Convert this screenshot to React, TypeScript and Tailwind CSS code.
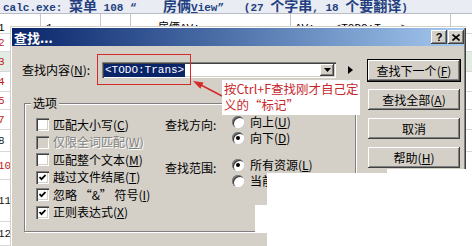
import type { ReactNode } from "react"

const sunken =
  "shadow-[inset_1px_1px_0_#808080,inset_2px_2px_0_#404040,inset_-1px_-1px_0_#ffffff,inset_-2px_-2px_0_#d4d0c8]"
const raised =
  "shadow-[inset_-1px_-1px_0_#404040,inset_1px_1px_0_#ffffff,inset_-2px_-2px_0_#808080,inset_2px_2px_0_#d4d0c8]"

const rows = [
  { n: "2", h: "h-[18px]", red: true },
  { n: "3", h: "h-[20px]", red: true, tint: true },
  { n: "4", h: "h-[20px]", red: true },
  { n: "5", h: "h-[18px]", red: true },
  { n: "7", h: "h-[20px]", red: true },
  { n: "8", h: "h-[22px]", red: false },
  { n: "10", h: "h-[28px]", red: true },
  { n: "11", h: "h-[42px]", red: false },
  { n: "12", h: "h-[24px]", red: false },
]

function Mn({ children }: { children: ReactNode }) {
  return (
    <>
      (<span className="underline underline-offset-[1px]">{children}</span>)
    </>
  )
}

function CheckBox({
  label,
  checked,
  disabled,
}: {
  label: ReactNode
  checked?: boolean
  disabled?: boolean
}) {
  return (
    <div className="h-[17.5px] flex items-center gap-[4px]">
      <div
        className={`w-[13px] h-[13px] shrink-0 flex items-center justify-center ${sunken} ${
          disabled ? "bg-[#d4d0c8]" : "bg-white"
        }`}
      >
        {checked && (
          <svg width="7" height="7" viewBox="0 0 7 7">
            <polyline points="0.5,3 2.5,5.2 6.5,1" fill="none" stroke="#000" strokeWidth="1.8" />
          </svg>
        )}
      </div>
      <span
        className={
          disabled ? "text-[#808080] [text-shadow:1px_1px_0_#ffffff]" : "text-black"
        }
      >
        {label}
      </span>
    </div>
  )
}

function Radio({ label, checked }: { label: ReactNode; checked?: boolean }) {
  return (
    <div className="h-[16px] flex items-center gap-[6px]">
      <div className="w-[12px] h-[12px] shrink-0 rounded-full bg-white shadow-[inset_1px_1px_0_#808080,inset_2px_2px_0_#404040,inset_-1px_-1px_0_#ffffff] flex items-center justify-center">
        {checked && <div className="w-[4px] h-[4px] rounded-full bg-black" />}
      </div>
      <span className="whitespace-nowrap">{label}</span>
    </div>
  )
}

function Btn({ children, primary }: { children: ReactNode; primary?: boolean }) {
  return (
    <div
      className={`h-[21px] w-[92px] flex items-center justify-center bg-[#d4d0c8] ${raised} ${
        primary ? "outline outline-1 outline-black" : ""
      }`}
    >
      {children}
    </div>
  )
}

export default function App() {
  return (
    <div className="relative w-[472px] h-[246px] overflow-hidden bg-white text-[12px] leading-[16px] font-['Noto_Sans_CJK_SC',sans-serif] text-black">
      {/* header line of the translation list */}
      <div className="h-[14px] bg-[#e9ecf2] overflow-hidden whitespace-pre font-bold text-[#233f80] border-b border-[#b8bcc8]">
        <div className="-mt-[3px] pl-[3px] leading-[17px] text-[14px]">
          <span className="font-['Liberation_Mono',monospace] text-[11px]">calc.exe: </span>
          菜单
          <span className="font-['Liberation_Mono',monospace] text-[11px]"> 108 “    </span>
          房俩
          <span className="font-['Liberation_Mono',monospace] text-[11px]">
            <span className="underline">V</span>iew”   (27{" "}
          </span>
          个字串
          <span className="font-['Liberation_Mono',monospace] text-[11px]">, 18 </span>
          个要翻译
          <span className="font-['Liberation_Mono',monospace] text-[11px]">)</span>
        </div>
      </div>

      {/* first table row */}
      <div className="flex h-[20px] border-b border-[#d8d8d8] font-['Liberation_Mono','Noto_Sans_CJK_SC',monospace] text-[11px] leading-[14px]">
        <div className="w-[43px] border-r border-[#c8c8c8] pt-[7px] -ml-[2px] pl-0">1</div>
        <div className="w-[60px] border-r border-[#c8c8c8] pt-[7px] pl-[5px]">1</div>
        <div className="w-[30px] border-r border-[#c8c8c8]" />
        <div className="w-[160px] border-r border-[#c8c8c8] pt-[7px] pl-[27px]">房俩AV:...</div>
        <div className="w-[160px] border-r border-[#c8c8c8] pt-[7px] pl-[4px]">AV:...&lt;TODO:T...&gt;</div>
        <div className="flex-1" />
      </div>
      {rows.map((r) => (
        <div
          key={r.n}
          className={`${r.h} flex border-b border-[#d8d8d8] font-['Liberation_Mono',monospace] text-[11px] ${
            r.tint ? "bg-[#e2ece2]" : ""
          }`}
        >
          <div
            className={`w-[43px] -ml-[2px] flex items-center ${
              r.red ? "text-[#c01818]" : "text-[#202020]"
            }`}
          >
            {r.n}
          </div>
        </div>
      ))}

      {/* find dialog */}
      <div className="absolute left-[10px] top-[26px] w-[456px] h-[232px] bg-[#d4d0c8] p-[2px] shadow-[inset_1px_1px_0_#d4d0c8,inset_2px_2px_0_#ffffff,inset_-1px_-1px_0_#404040,inset_-2px_-2px_0_#808080]">
        <div className="h-[18px] flex items-center bg-linear-to-r from-[#0a246a] to-[#a6caf0] pl-[2px]">
          <span className="text-white font-bold text-[13px] leading-none">查找...</span>
          <div className="ml-auto flex gap-[1px]">
            <div className={`w-[16px] h-[14px] bg-[#d4d0c8] ${raised} flex items-center justify-center font-bold text-[11px] leading-none font-['Liberation_Sans',sans-serif]`}>
              ?
            </div>
            <div className={`w-[16px] h-[14px] bg-[#d4d0c8] ${raised} flex items-center justify-center`}>
              <svg width="8" height="7" viewBox="0 0 8 7">
                <path d="M0.5 0.5 L7.5 6.5 M7.5 0.5 L0.5 6.5" stroke="#000" strokeWidth="1.6" />
              </svg>
            </div>
          </div>
        </div>

        <div className="flex">
          <div className="w-[346px] flex flex-col">
            <div className="flex items-center mt-[16px] h-[16px]">
              <span className="ml-[10px] w-[80px] whitespace-nowrap">
                查找内容<Mn>N</Mn>:
              </span>
              <div className={`w-[234px] h-[16px] bg-white ${sunken} flex items-center pl-[2px] pr-[2px]`}>
                <span className="bg-[#0a246a] text-white font-['Liberation_Mono',monospace] text-[11px] leading-[13px] px-[1px]">
                  &lt;TODO:Trans&gt;
                </span>
                <div className={`ml-auto w-[14px] h-[12px] bg-[#d4d0c8] ${raised} flex items-center justify-center`}>
                  <svg width="7" height="4" viewBox="0 0 7 4">
                    <path d="M0 0 H7 L3.5 4 Z" fill="#000" />
                  </svg>
                </div>
              </div>
              <svg className="ml-[12px]" width="5" height="8" viewBox="0 0 5 8">
                <path d="M0 0 L5 4 L0 8 Z" fill="#000" />
              </svg>
            </div>

            <div className="mt-[25px] ml-[12px] w-[332px] h-[129px] border border-[#808080] shadow-[inset_1px_1px_0_#ffffff,1px_1px_0_#ffffff]">
              <div className="-mt-[8px] ml-[6px] w-fit px-[2px] bg-[#d4d0c8] leading-[14px]">选项</div>
              <div className="flex">
                <div className="ml-[11px] mt-[6px] w-[129px] flex flex-col whitespace-nowrap">
                  <CheckBox label={<>匹配大小写<Mn>C</Mn></>} />
                  <CheckBox label={<>仅限全词匹配<Mn>W</Mn></>} disabled />
                  <CheckBox label={<>匹配整个文本<Mn>M</Mn></>} />
                  <CheckBox label={<>越过文件结尾<Mn>T</Mn></>} checked />
                  <CheckBox label={<>忽略 “&amp;” 符号<Mn>I</Mn></>} checked />
                  <CheckBox label={<>正则表达式<Mn>X</Mn></>} checked />
                </div>
                <div className="flex flex-col">
                  <div className="flex items-start">
                    <span className="w-[67px] mt-[7px] whitespace-nowrap">查找方向:</span>
                    <div className="mt-[4px] flex flex-col">
                      <Radio label={<>向上<Mn>U</Mn></>} />
                      <Radio label={<>向下<Mn>D</Mn></>} checked />
                    </div>
                  </div>
                  <div className="flex items-start mt-[11px]">
                    <span className="w-[67px] mt-[3px] whitespace-nowrap">查找范围:</span>
                    <div className="flex flex-col">
                      <Radio label={<>所有资源<Mn>L</Mn></>} checked />
                      <Radio label={<>当前资源<Mn>R</Mn></>} />
                    </div>
                  </div>
                </div>
              </div>
            </div>
          </div>

          <div className="ml-[10px] mt-[14px] flex flex-col gap-[8px]">
            <Btn primary>
              查找下一个<Mn>F</Mn>
            </Btn>
            <Btn>
              查找全部<Mn>A</Mn>
            </Btn>
            <Btn>取消</Btn>
            <Btn>
              帮助<Mn>H</Mn>
            </Btn>
          </div>
        </div>
      </div>

      {/* blank pasted area covering the lower right of the dialog */}
      <div className="absolute left-[267px] top-[173px] w-[205px] h-[73px] bg-white" />
      <div className="absolute left-[387px] top-[169px] w-[85px] h-[4px] bg-white" />
      <div className="absolute left-[255px] top-[205px] w-[12px] h-[27px] bg-white" />

      {/* red annotation */}
      <div className="absolute left-[97px] top-[54px] w-[94px] h-[31px] border border-[#d42a2a]" />
      <svg className="absolute left-[190px] top-[76px]" width="36" height="24" viewBox="0 0 36 24">
        <path d="M11 9 L32 20" stroke="#d42a2a" strokeWidth="1.5" />
        <path d="M3 5 L13.5 6.5 L10.3 12.7 Z" fill="#d42a2a" />
      </svg>
      <div className="absolute left-[222px] top-[80px] w-[138px] h-[35px] bg-white pl-[2px] pt-[1px] text-[#c8282c] text-[12.5px] leading-[16px] whitespace-nowrap">
        <div>按Ctrl+F查找刚才自己定</div>
        <div>义的“标记”</div>
      </div>
    </div>
  )
}
